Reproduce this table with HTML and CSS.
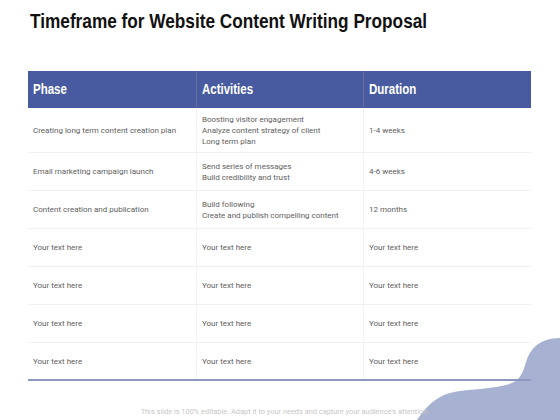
FILE: index.html
```html
<!DOCTYPE html>
<html>
<head>
<meta charset="utf-8">
<link rel="stylesheet" href="styles.css">
</head>
<body>
<div class="slide">
  <svg class="blob" width="560" height="420" viewBox="0 0 560 420">
    <path d="M560 338 C548 338 538 342 532 350 C524 360 526 372 517 380 C505 390 470 388 450 393 C435 397 425 408 417 420 L560 420 Z" fill="#a7b1d1"/>
  </svg>
  <h1 class="title"><span class="narrow">Timeframe for Website Content Writing Proposal</span></h1>
  <div class="table">
    <div class="row head">
      <div class="cell"><span class="narrow">Phase</span></div>
      <div class="cell"><span class="narrow">Activities</span></div>
      <div class="cell"><span class="narrow">Duration</span></div>
    </div>
    <div class="row first">
      <div class="cell">Creating long term content creation plan</div>
      <div class="cell">Boosting visitor engagement<br>Analyze content strategy of client<br>Long term plan</div>
      <div class="cell">1-4 weeks</div>
    </div>
    <div class="row">
      <div class="cell">Email marketing campaign launch</div>
      <div class="cell">Send series of messages<br>Build credibility and trust</div>
      <div class="cell">4-6 weeks</div>
    </div>
    <div class="row">
      <div class="cell">Content creation and publication</div>
      <div class="cell">Build following<br>Create and publish compelling content</div>
      <div class="cell">12 months</div>
    </div>
    <div class="row">
      <div class="cell">Your text here</div>
      <div class="cell">Your text here</div>
      <div class="cell">Your text here</div>
    </div>
    <div class="row">
      <div class="cell">Your text here</div>
      <div class="cell">Your text here</div>
      <div class="cell">Your text here</div>
    </div>
    <div class="row">
      <div class="cell">Your text here</div>
      <div class="cell">Your text here</div>
      <div class="cell">Your text here</div>
    </div>
    <div class="row last">
      <div class="cell">Your text here</div>
      <div class="cell">Your text here</div>
      <div class="cell">Your text here</div>
    </div>
  </div>
  <p class="footer">This slide is 100% editable. Adapt it to your needs and capture your audience's attention.</p>
</div>
</body>
</html>
```

FILE: styles.css
```css
html, body {
  margin: 0;
  padding: 0;
  background: #ffffff;
}
.slide {
  position: relative;
  width: 560px;
  height: 420px;
  overflow: hidden;
  font-family: Roboto, "Liberation Sans", sans-serif;
}
.blob {
  position: absolute;
  left: 0;
  top: 0;
}
.narrow {
  display: inline-block;
  transform: scaleX(0.82);
  transform-origin: left center;
  white-space: nowrap;
}
.title {
  position: relative;
  margin: 0;
  padding: 9px 0 0 30px;
  height: 62px;
  box-sizing: border-box;
  font-family: "Liberation Sans", Arial, sans-serif;
  font-weight: bold;
  font-size: 21px;
  line-height: 24px;
  color: #111;
  white-space: nowrap;
}
.table {
  position: relative;
  margin-left: 28px;
  width: 503px;
  margin-top: 9px;
}
.row {
  display: grid;
  grid-template-columns: 168px 167px 168px;
  height: 38px;
  border-bottom: 1px solid #f0f0f2;
  box-sizing: border-box;
}
.row.first {
  height: 45px;
}
.row.last {
  border-bottom: 2px solid #8e96c2;
}
.cell {
  display: flex;
  align-items: center;
  padding-left: 5px;
  font-size: 8px;
  line-height: 11px;
  color: #606060;
  border-left: 1px solid #f3f3f5;
}
.cell:first-child {
  border-left: none;
}
.row.head {
  height: 37px;
  background: #485ba1;
  border-bottom: none;
}
.row.head .cell {
  font-family: "Liberation Sans", Arial, sans-serif;
  font-weight: bold;
  font-size: 14px;
  color: #fff;
  border-left: 1px solid #6a6f9a;
}
.row.head .cell:first-child {
  border-left: none;
}
.footer {
  position: relative;
  margin: 26px 0 0 0;
  padding-left: 10px;
  text-align: center;
  font-size: 7.4px;
  color: #c8c8c8;
}
```
